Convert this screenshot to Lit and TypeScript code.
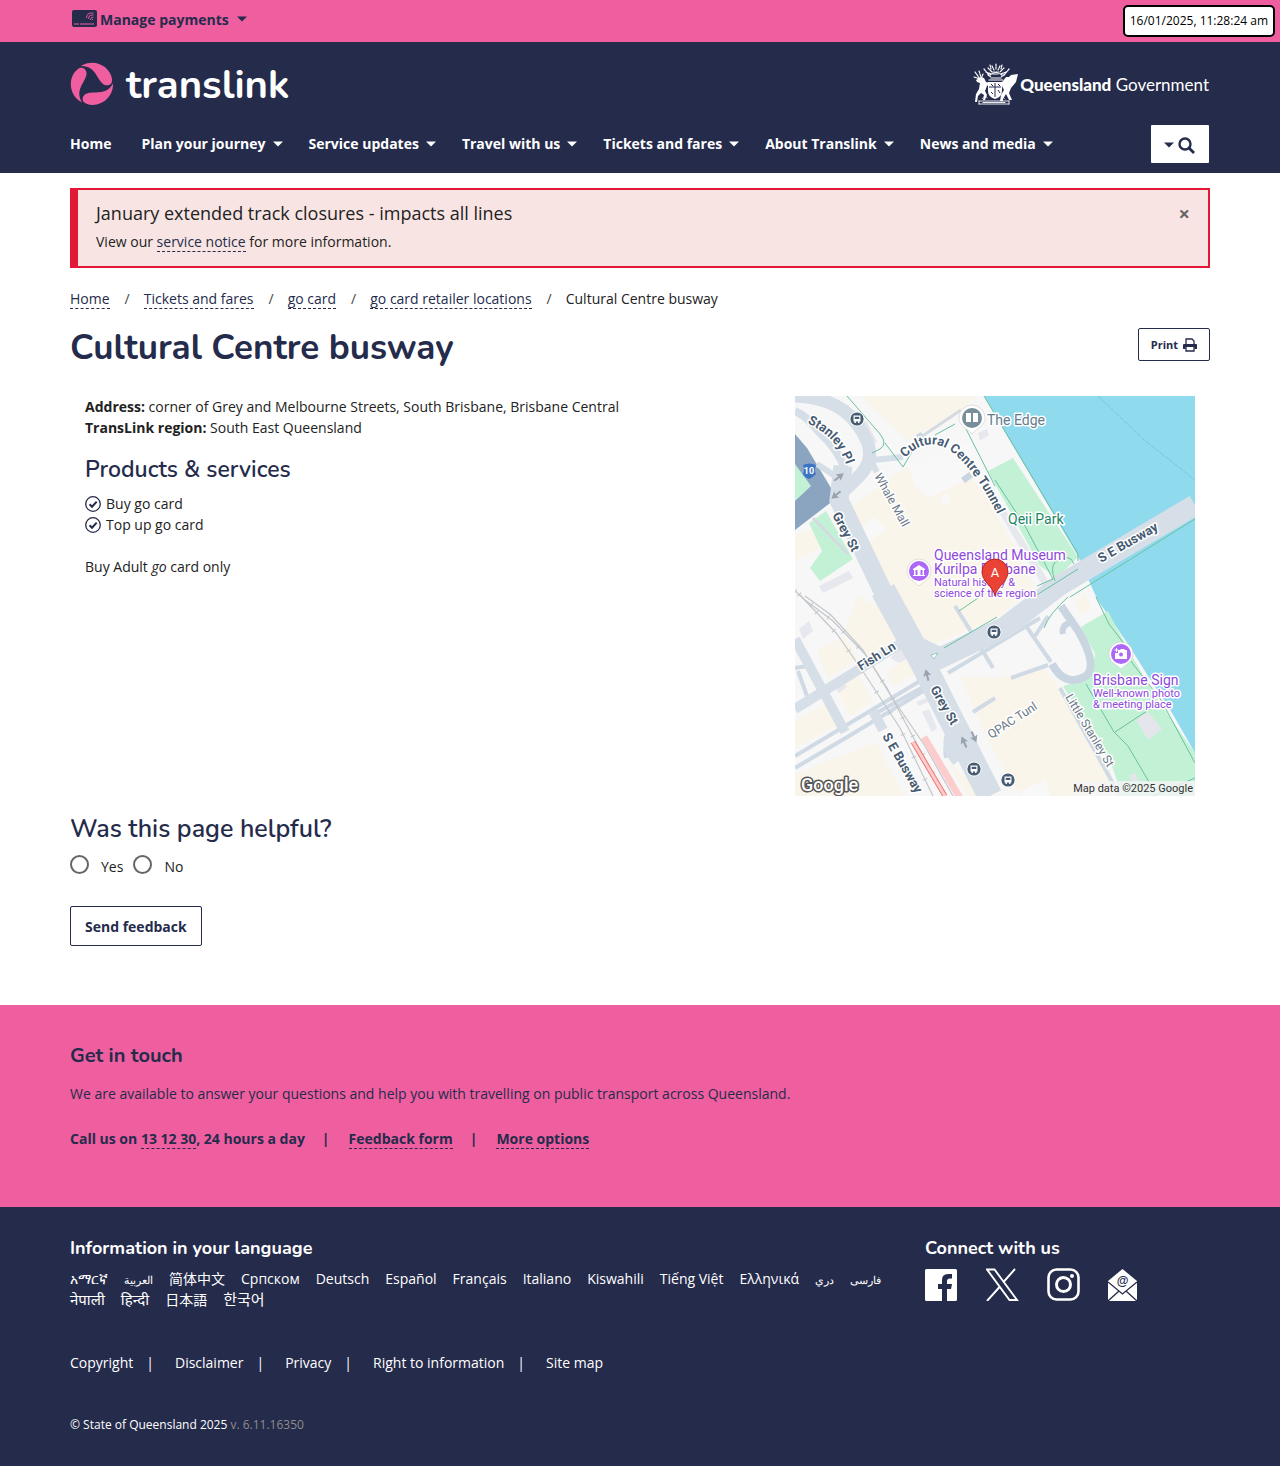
import { LitElement, html, css, svg } from "lit";
import { customElement } from "lit/decorators.js";

const busStop = (x: number, y: number) => svg`
  <g transform="translate(${x} ${y})">
    <circle r="7.5" fill="#fff" />
    <circle r="6.6" fill="#475b72" />
    <path d="M-3.5 -3.5h7v6h-1v1.4h-1.4v-1.4h-2.2v1.4h-1.4v-1.4h-1z" fill="#fff" />
    <path d="M-2.3 -2.2h4.6v2.2h-4.6z" fill="#475b72" />
  </g>`;

const arrow = (x: number, y: number, deg: number) => svg`
  <path transform="translate(${x} ${y}) rotate(${deg})" d="M0 -6L4 1L1 0V6H-1V0L-4 1Z" fill="#9aa3ad" />`;

@customElement("street-map")
class StreetMap extends LitElement {
  static styles = css`
    :host { display: block; }
    .map { display: block; width: 100%; height: auto; background: #f7f7f7; }
    .label { font-family: Roboto, "Liberation Sans", sans-serif; paint-order: stroke; stroke: #fff; stroke-width: 3px; stroke-linejoin: round; }
    .road { fill: #475b72; font-size: 13px; font-weight: 700; }
    .minor { fill: #6b7887; font-size: 12px; }
    .place { fill: #8f49dc; font-size: 14px; }
    .note { fill: #8f49dc; font-size: 11px; }
    .grey { fill: #637c8d; font-size: 14px; }
    .park { fill: #1a8563; font-size: 14px; }
    .credit { font-family: Roboto, "Liberation Sans", sans-serif; font-size: 11px; fill: #333; }
    .google { font-family: Roboto, "Liberation Sans", sans-serif; font-size: 18px; font-weight: 500; fill: #fff; stroke: #555; stroke-width: 3px; paint-order: stroke; stroke-linejoin: round; }
  `;

  render() {
    return html`
      <svg class="map" viewBox="0 0 400 400" role="img" aria-label="Map of Cultural Centre busway">
        <path d="M189 0H400V357L373 310L353 280L333 248L302 203L283 160L207 31Z" fill="#90daee" />
        <path d="M303 0L348 43L400 84" stroke="#6dcbe6" fill="none" stroke-dasharray="5 1" />
        <g fill="#faf5ea">
          <path d="M66 0H181L166 14L113 44Z" />
          <path d="M53 113L113 70L120 89L133 102L176 80L204 123L240 190L200 224L128 252L70 148Z" />
          <path d="M0 138L17 133L27 152L0 164Z" />
          <path d="M62 200L107 223L104 240L74 260L50 236Z" />
          <path d="M22 254L50 240L62 262L33 283Z" />
          <path d="M92 275L114 261L122 277L98 290Z" />
          <path d="M41 292L62 278L78 305L55 320Z" />
          <path d="M0 324L32 308L43 328L0 352Z" />
          <path d="M0 378L82 346L92 370L110 400H0Z" />
          <path d="M165 281L200 282L250 273L267 297L318 380L308 400H225L196 350Z" />
          <path d="M279 204L290 198L296 212L286 219Z" />
          <path d="M150 362L166 388L172 400H190Z" />
        </g>
        <g fill="#f8f8f8">
          <path d="M62 134L80 121L91 134L72 147Z" />
          <path d="M145 103L152 98L156 105L149 109Z" />
          <path d="M226 395L250 384L256 400H226Z" />
          <path d="M180 235L196 226L201 233L184 242Z" />
          <path d="M114 72L176 44L192 70L176 82L133 102L120 89Z" />
        </g>
        <g fill="#e7e8ee">
          <path d="M60 20L72 26L82 46L77 50Z" />
          <path d="M183 37L192 33L194 39L185 45Z" />
          <path d="M4 233L14 225L18 235L8 243Z" />
          <path d="M24 190L54 175L58 182L28 197Z" />
          <path d="M95 262L110 247L116 261L104 267Z" />
          <path d="M40 292L48 286L52 291L44 297Z" />
          <path d="M121 306L131 302L133 306L124 310Z" />
          <path d="M127 316L134 313L142 332L137 336Z" />
          <path d="M205 118L210 113L254 186L248 190Z" />
        </g>
        <g fill="#c3f1d5">
          <path d="M193 75L218 62L283 161L262 182L245 170Z" />
          <path d="M286 231L313 215L317 223L333 253L360 300L400 357V400H327L317 370L268 290L280 287L298 272L300 258Z" />
          <path d="M14 127L31 115L58 163L25 185L15 172L27 155Z" />
        </g>
        <path d="M341 324L353 316L367 333L353 344Z M334 380L340 377L344 386H337Z" fill="#e4e6ec" />
        <path d="M0 38L12 52L39 97V104L0 134Z" fill="#8ba5c1" />
        <path d="M0 68L16 90L0 105Z" fill="#c3f1d5" />
        <g fill="none" stroke="#cfdae4" stroke-width="4">
          <path d="M0 360L130 282M0 372L54 340L130 294M78 319L130 290M153 277L200 249L245 222" />
          <path d="M160 210L180 242L198 272M216 282L253 269M231 230L256 266M253 220L240 240M265 292L325 400M0 272L12 270" />
          <path d="M178 316L200 302M3 275L12 300M151 362Q148 345 158 337" />
        </g>
        <g fill="none" stroke="#d6dfe7">
          <path d="M0 0C44 2 62 22 72 45C81 67 66 80 45 98" stroke-width="13" />
          <path d="M0 15Q12 20 24 36Q44 54 51 76" stroke-width="8" />
          <path d="M78 64L108 61M22 68L40 80M76 65L82 76" stroke-width="6" />
          <path d="M48 70L44 104L92 204" stroke-width="19" />
          <path d="M88 194L124 260L195 400" stroke-width="25" />
          <path d="M400 109L265 189L210 231L145 262L120 250" stroke-width="21" />
          <path d="M0 313L110 245" stroke-width="10" />
          <path d="M0 243L50 336M78 315L88 334" stroke-width="10" />
          <path d="M154 340Q150 353 162 366" stroke-width="9" />
        </g>
        <path d="M266 210L284 236Q303 270 291 280Q270 292 257 268" fill="none" stroke="#c9d6e1" stroke-width="8" />
        <path d="M268 238Q266 229 275 227" fill="none" stroke="#c9d6e1" stroke-width="6" />
        <path d="M166 82L174 76L178 81L170 87Z M121 39L126 36L132 44L126 47Z" fill="#c9d6e1" />
        <path d="M126 41L166 14M18 122L53 158" fill="none" stroke="#d5dae1" stroke-width="3" />
        <path d="M136 259L143 257L139 263Z" fill="#fff" stroke="#61b899" stroke-width=".6" />
        <g fill="none" stroke="#6ac1a0">
          <path d="M52 0L85 38Q93 48 85 53L77 57M90 47L108 71L118 54M140 39L160 28M171 33L200 90M189 0L283 158V165" />
          <path d="M200 84L230 130L258 183L242 190M260 185Q255 172 260 166Q275 156 279 168M240 200L283 173M275 201L400 123M164 215L186 200M149 252L202 221M249 232Q254 218 273 201" />
          <path d="M301 201L314 228L327 245L335 264L348 281L366 304L400 367M291 288L319 336L333 350L354 386M320 336L358 311M358 400L400 382" />
        </g>
        <g fill="none" stroke="#c4c7cb" stroke-width="1.2">
          <path d="M0 195L10 204L38 225L70 258L92 292L110 326L150 400" />
          <path d="M4 198L42 238L71 280L105 332L138 400" />
          <path d="M10 200L36 219L68 254L96 300L130 350L158 400" />
        </g>
        <g fill="none" stroke="#c4c7cb" stroke-width="5">
          <path d="M0 195L10 204L38 225L70 258L92 292L110 326L150 400" stroke-dasharray="1 20" />
          <path d="M4 198L42 238L71 280L105 332L138 400" stroke-dasharray="1 24" />
        </g>
        <path d="M129 341L165 402" stroke="#fdcdcd" stroke-width="7" />
        <path d="M118 346L150 400" stroke="#ee7777" stroke-width="5" />
        <path d="M118 346L150 400" stroke="#fcc" stroke-width="3" />
        ${arrow(44, 81, 52)} ${arrow(41, 99, 230)} ${arrow(132, 279, -14)} ${arrow(169, 346, -24)} ${arrow(179, 341, 156)}
        ${busStop(62, 23)} ${busStop(199, 236)} ${busStop(179, 373)} ${busStop(213, 384)}

        <path d="M8 69Q14 66 21 69Q19 75 21 78Q17 82 14 83Q9 81 8 78Q10 73 8 69Z" fill="#3d73c4" />
        <text x="14" y="78" text-anchor="middle" font-family="Roboto, sans-serif" font-size="9" font-weight="700" fill="#fff">10</text>

        <path id="stanley" d="M12 27Q44 42 52 72" fill="none" />
        <path id="tunnel" d="M110 62C128 42 148 46 164 62C180 78 193 98 206 126" fill="none" />
        <text class="label road"><textPath href="#stanley">Stanley Pl</textPath></text>
        <text class="label road"><textPath href="#tunnel">Cultural Centre Tunnel</textPath></text>
        <text class="label minor" transform="translate(79 80) rotate(61)">Whale Mall</text>
        <text class="label road" transform="translate(37 119) rotate(62)">Grey St</text>
        <text class="label road" transform="translate(135 293) rotate(60)">Grey St</text>
        <text class="label road" transform="translate(66 275) rotate(-32)">Fish Ln</text>
        <text class="label road" transform="translate(306 167) rotate(-30)">S E Busway</text>
        <text class="label road" transform="translate(87 340) rotate(60)">S E Busway</text>
        <text class="label minor" transform="translate(196 343) rotate(-33)">QPAC Tunl</text>
        <text class="label minor" transform="translate(270 301) rotate(59)">Little Stanley St</text>
        <text class="label grey" x="192" y="29">The Edge</text>
        <text class="label park" x="213" y="128">Qeii Park</text>
        <text class="label place" x="139" y="164">Queensland Museum</text>
        <text class="label place" x="139" y="178">Kurilpa Brisbane</text>
        <text class="label note" x="139" y="190">Natural history &amp;</text>
        <text class="label note" x="139" y="201">science of the region</text>
        <text class="label place" x="298" y="289">Brisbane Sign</text>
        <text class="label note" x="298" y="301">Well-known photo</text>
        <text class="label note" x="298" y="312">&amp; meeting place</text>

        <path d="M164 22a13 13 0 1 1 26 0c0 8-8 10-13 16c-5-6-13-8-13-16z" fill="#fff" stroke="#ccc" stroke-width=".6" />
        <circle cx="177" cy="22" r="10" fill="#788f9b" />
        <path d="M171 17h5v9h-5zM178 17h5v9h-5z" fill="#fff" />
        <path d="M112 175a12 12 0 1 1 24 0c0 8-7 10-12 15c-5-5-12-7-12-15z" fill="#fff" stroke="#ccc" stroke-width=".6" />
        <circle cx="124" cy="175" r="10" fill="#ae68f7" />
        <path d="M118 173l6-4 6 4v1h-1v5h1v1h-12v-1h1v-5h-1zM120.500 174v5h2v-5zM125.500 174v5h2v-5z" fill="#fff" fill-rule="evenodd" />
        <path d="M314 258a12 12 0 1 1 24 0c0 8-7 10-12 15c-5-5-12-7-12-15z" fill="#fff" stroke="#ccc" stroke-width=".6" />
        <circle cx="326" cy="258" r="10" fill="#ae68f7" />
        <path d="M323 254h2l1-1h3l1 1h2v9h-12v-6h3z" fill="#fff" />
        <circle cx="326" cy="258.500" r="2" fill="#ae68f7" />
        <path d="M321.500 252v4M319.500 254h4" stroke="#fff" />

        <path d="M200 200C198 190 187 186 187 176a13 13 0 0 1 26 0C213 186 202 190 200 200Z" fill="#ea4335" stroke="#b31412" stroke-width=".8" />
        <text x="200" y="181" text-anchor="middle" font-family="Roboto, sans-serif" font-size="13" fill="#fff">A</text>
        <text class="google" x="6" y="395">Google</text>
        <rect x="278" y="385" width="122" height="15" fill="#f5f5f5" fill-opacity=".8" />
        <text class="credit" x="398" y="396" text-anchor="end">Map data ©2025 Google</text>
      </svg>`;
  }
}

const NAV = ["Plan your journey", "Service updates", "Travel with us", "Tickets and fares", "About Translink", "News and media"];
const CRUMBS = ["Home", "Tickets and fares", "go card", "go card retailer locations"];
const LANGS: [string, string][] = [
  ["am", "አማርኛ"], ["ar", "العربية"], ["zh", "简体中文"], ["sr", "Српском"], ["de", "Deutsch"], ["es", "Español"],
  ["fr", "Français"], ["it", "Italiano"], ["sw", "Kiswahili"], ["vi", "Tiếng Việt"], ["el", "Ελληνικά"],
  ["prs", "دري"], ["fa", "فارسی"], ["ne", "नेपाली"], ["hi", "हिन्दी"], ["ja", "日本語"], ["ko", "한국어"],
];
const LEGAL = ["Copyright", "Disclaimer", "Privacy", "Right to information", "Site map"];

const caret = html`<svg class="caret" viewBox="0 0 10 6" aria-hidden="true"><path d="M0 .5H10L5 5.500Z" fill="currentColor" /></svg>`;
const tick = html`
  <svg class="tick" viewBox="0 0 16 16" aria-hidden="true">
    <circle cx="8" cy="8" r="7.300" fill="none" stroke="#252b4b" stroke-width="1.300" />
    <path d="M4.500 8.300L7 10.700L11.700 5.600" fill="none" stroke="#252b4b" stroke-width="2" />
  </svg>`;

@customElement("app-root")
class AppRoot extends LitElement {
  static styles = css`
    :host {
      --navy: #252b4b;
      --pink: #ef5fa0;
      display: block;
      background: #fff;
      color: #222;
      font: 400 14px/21px "Open Sans", "Noto Sans", "Noto Sans CJK SC", sans-serif;
    }
    * { box-sizing: border-box; }
    h1, h2, h3, p, ul, ol { margin: 0; padding: 0; }
    ul, ol { list-style: none; }
    a { color: inherit; text-decoration: none; }
    button { font: inherit; color: inherit; border: 0; background: none; padding: 0; cursor: pointer; }
    .wrap { max-width: 1140px; margin: 0 auto; }
    .caret { width: 10px; height: 6px; flex: none; }
    .tick { width: 16px; height: 16px; flex: none; margin-top: 3px; }

    .top { background: var(--pink); color: var(--navy); height: 42px; }
    .pay { display: flex; align-items: center; font-weight: 700; height: 38px; }
    .pay .card { width: 26px; height: 18px; margin: 0 3px 0 1px; }
    .pay .caret { margin-left: 8px; }
    .clock { position: absolute; top: 5px; right: 5px; height: 32px; padding: 0 5px; border: 2px solid #000; border-radius: 5px; background: #fff; color: #000; font-size: 12px; line-height: 28px; }

    .header { background: var(--navy); color: #fff; padding-bottom: 10px; }
    .brands { display: flex; justify-content: space-between; align-items: center; height: 83px; }
    .brand { display: flex; align-items: center; }
    .swirl { width: 44px; height: 44px; }
    .wordmark { font: 700 40px/44px Nunito, Lato, sans-serif; margin-left: 12px; padding-top: 2px; }
    .arms { width: 46px; height: 42px; margin-right: 1px; }
    .gov { font: 400 17px/24px Lato, sans-serif; white-space: pre; padding: 2px 1px 0 0; }
    .gov b { font-weight: 900; }
    .navrow { display: flex; justify-content: space-between; align-items: center; }
    .nav { display: flex; gap: 26px; font-weight: 700; padding-bottom: 2px; }
    .nav .item { display: flex; align-items: center; gap: 7px; }
    .nav .caret { margin-top: 2px; }
    .nav .home { padding-right: 4px; }
    .search { display: flex; align-items: center; gap: 4px; padding: 2px 13px 0; width: 58px; height: 38px; background: #fff; color: var(--navy); border-radius: 1px; margin-right: 1px; }
    .search .glass { width: 17px; height: 17px; flex: none; }

    .alert { display: flex; justify-content: space-between; align-items: flex-start; margin-top: 15px; padding: 12px 18px 14px; border: 2px solid #e31837; border-left-width: 8px; background: #f8e5e3; }
    .close { color: #666; font-size: 20px; font-weight: 700; line-height: 24px; }
    .dashed { color: #252b4b; border-bottom: 1px dashed #252b4b; }
    .crumbs { display: flex; margin-top: 20px; }
    .crumbs li + li::before { content: "/"; padding: 0 14px 0 15px; color: #444; }

    h1, h2, h3 { color: var(--navy); font-family: Nunito, Lato, sans-serif; font-weight: 700; }
    .alert h2 { font-family: "Open Sans", sans-serif; color: #222; font-size: 18px; font-weight: 400; line-height: 22px; margin-bottom: 7px; }
    .title { display: flex; justify-content: space-between; align-items: flex-start; margin-top: 19px; }
    h1 { font-size: 35px; line-height: 40px; }
    .print { display: flex; align-items: center; gap: 5px; border: 1px solid var(--navy); border-radius: 2px; height: 33px; padding: 0 12px; color: var(--navy); font-size: 11px; font-weight: 700; }
    .printer { width: 14px; height: 14px; }
    .detail { display: flex; justify-content: space-between; gap: 30px; margin-top: 28px; padding: 0 15px; }
    .detail .map { flex: 0 1 400px; }
    .detail h3 { font-size: 23px; font-weight: 600; line-height: 28px; margin: 18px 0 9px; }
    .detail li { display: flex; gap: 5px; }
    .detail .remark { margin-top: 21px; }
    .helpful { font-size: 25px; font-weight: 600; line-height: 30px; margin-top: 18px; }
    .radios { display: flex; margin-top: 10px; }
    .radios label { display: flex; margin-right: 10px; }
    .radios span { padding-top: 2px; }
    .radios input { appearance: none; width: 19px; height: 19px; margin: 1px 12px 0 0; border: 2px solid #666; border-radius: 50%; }
    .radios input:checked { box-shadow: inset 0 0 0 3px #fff; background: var(--navy); }
    .send { display: block; height: 40px; margin: 29px 0 59px; padding: 0 14px; border: 1px solid var(--navy); border-radius: 2px; color: var(--navy); font-weight: 700; }

    .touch { background: var(--pink); color: var(--navy); padding: 38px 0 58px; }
    .touch h2 { font-size: 20px; line-height: 26px; margin-bottom: 14px; }
    .touch .ways { display: flex; margin-top: 24px; font-weight: 700; }
    .touch li + li::before { content: "|"; padding: 0 19px 0 17px; }

    .footer { background: var(--navy); color: #fff; padding: 28px 0 31px; }
    .cols { display: grid; grid-template-columns: 3fr 1fr; }
    .footer h2 { color: #fff; font-size: 18px; line-height: 26px; margin-bottom: 7px; }
    .langs { display: flex; flex-wrap: wrap; gap: 0 16px; padding-right: 15px; }
    .langs li { height: 21px; }
    .langs :lang(ar), .langs :lang(prs), .langs :lang(fa) { font-size: 11px; }
    .langs :lang(ne), .langs :lang(hi), .langs :lang(ko) { font-size: 15px; }
    .social { display: flex; gap: 28px; }
    .social svg { display: block; width: 33px; height: 33px; }
    .legal { display: flex; margin-top: 42px; }
    .legal li + li::before { content: "|"; padding: 0 21px 0 13px; }
    .copy { margin-top: 41px; font-size: 12px; }
    .copy span { color: #8d8d8d; }
  `;

  render() {
    return html`
      <div class="top">
        <div class="wrap">
          <button class="pay">
            <svg class="card" viewBox="0 0 26 18" aria-hidden="true">
              <rect x="1" y="0" width="25" height="17" rx="2" fill="#252b4b" />
              <path d="M3 14h5M9 14h14" stroke="#ef5fa0" />
              <path d="M15.500 8q0-5 5-5h2M17.500 9q0-4 3-4h2M19.500 10q0-3 3-3M21.500 10v-1" stroke="#ef5fa0" stroke-width=".9" fill="none" />
            </svg>Manage payments${caret}
          </button>
        </div>
        <time class="clock">16/01/2025, 11:28:24 am</time>
      </div>

      <header class="header">
        <div class="wrap">
          <div class="brands">
            <a class="brand" href="#">
              <svg class="swirl" viewBox="0 0 44 44" aria-hidden="true">
                <g fill="#ef5fa0">
                  <path d="M11 4C24 -4 40 4 42 17C43 24 35 25 32 21C26 15 25 4 11 4Z" />
                  <path d="M11 4C24 -4 40 4 42 17C43 24 35 25 32 21C26 15 25 4 11 4Z" transform="rotate(120 22 22)" />
                  <path d="M11 4C24 -4 40 4 42 17C43 24 35 25 32 21C26 15 25 4 11 4Z" transform="rotate(240 22 22)" />
                </g>
              </svg>
              <span class="wordmark">translink</span>
            </a>
            <a class="brand" href="#">
              <svg class="arms" viewBox="0 0 46 42" aria-hidden="true">
                <g fill="none" stroke="#fff" stroke-width="1.200" stroke-linecap="round">
                  <path d="M2 9l5 7M1 14l6 2M6 8l2 6M10 11l-2 5M23 1v6M19 3l2 4M27 3l-2 4M15 5l4 4M31 5l-4 4M13 9l5 2M33 9l-5 2M17 2l1 4M29 2l-1 4M36 6l-5 6M11 6l5 6" stroke-dasharray="2 1" />
                  <path d="M17 12q6-5 12 0M18 15h10M16 17h14" />
                  <path d="M19 9h8M20 11h6M15 12l3 2M31 12l-3 2" stroke-dasharray="1 1" />
                  <path d="M6 38h30M6 41h30M6 38v3M36 38v3M10 39.500h22" stroke-width=".9" />
                </g>
                <path d="M3 17l5-3 3 1 2 4 4 1-3 3-2 5 2 4-2 5h-2l1-5-3-2-3 3-1 6H2l1-8 3-5 1-6-3-1z" fill="#fff" />
                <path d="M45 11l-2 8-5 6-2 5 3 7h-3l-3-6-3 5v2h-3l1-6 3-5-2-4-3-2 4-3 3-4h3l2-2z" fill="#fff" />
                <path d="M15 19h14v9q0 6-7 8q-7-2-7-8z" fill="#fff" />
                <path d="M16 24h12M22 20v14M18 21l2 2M25 21l2 2M18 29l2 2M25 27l2 3" stroke="#252b4b" stroke-width="1" />
                <path d="M9 36l3-4 3 4M30 34l3 3" stroke="#fff" fill="none" stroke-dasharray="1 1" />
              </svg>
              <span class="gov"><b>Queensland</b> Government</span>
            </a>
          </div>
          <div class="navrow">
            <nav class="nav">
              <a class="item home" href="#">Home</a>
              ${NAV.map((n) => html`<a class="item" href="#">${n}${caret}</a>`)}
            </nav>
            <button class="search" aria-label="Search">
              ${caret}
              <svg class="glass" viewBox="0 0 17 17"><circle cx="7" cy="7" r="5.500" fill="none" stroke="currentColor" stroke-width="2.400" /><path d="M11 11l5 5" stroke="currentColor" stroke-width="2.800" /></svg>
            </button>
          </div>
        </div>
      </header>

      <main class="wrap">
        <section class="alert">
          <div>
            <h2>January extended track closures - impacts all lines</h2>
            <p>View our <a class="dashed" href="#">service notice</a> for more information.</p>
          </div>
          <button class="close" aria-label="Close">×</button>
        </section>

        <ol class="crumbs">
          ${CRUMBS.map((c) => html`<li><a class="dashed" href="#">${c}</a></li>`)}
          <li>Cultural Centre busway</li>
        </ol>

        <div class="title">
          <h1>Cultural Centre busway</h1>
          <button class="print">Print
            <svg class="printer" viewBox="0 0 14 14" aria-hidden="true">
              <path d="M3 7V1h6l2 2v4" fill="none" stroke="currentColor" stroke-width="1.300" />
              <path d="M1 6h12q1 0 1 1v4h-2.500v-2h-9v2H0V7q0-1 1-1z" fill="currentColor" />
              <path d="M3 9v4h8V9" fill="none" stroke="currentColor" stroke-width="1.300" />
            </svg>
          </button>
        </div>

        <div class="detail">
          <div>
            <p><b>Address:</b> corner of Grey and Melbourne Streets, South Brisbane, Brisbane Central</p>
            <p><b>TransLink region:</b> South East Queensland</p>
            <h3>Products &amp; services</h3>
            <ul>
              <li>${tick}Buy go card</li>
              <li>${tick}Top up go card</li>
            </ul>
            <p class="remark">Buy Adult <i>go</i> card only</p>
          </div>
          <street-map class="map"></street-map>
        </div>

        <form @submit=${(e: Event) => e.preventDefault()}>
          <h2 class="helpful" id="helpful">Was this page helpful?</h2>
          <div class="radios" role="radiogroup" aria-labelledby="helpful">
            <label><input type="radio" name="helpful" value="yes" /><span>Yes</span></label>
            <label><input type="radio" name="helpful" value="no" /><span>No</span></label>
          </div>
          <button class="send">Send feedback</button>
        </form>
      </main>

      <section class="touch">
        <div class="wrap">
          <h2>Get in touch</h2>
          <p>We are available to answer your questions and help you with travelling on public transport across Queensland.</p>
          <ul class="ways">
            <li>Call us on <a class="dashed" href="#">13 12 30</a>, 24 hours a day</li>
            <li><a class="dashed" href="#">Feedback form</a></li>
            <li><a class="dashed" href="#">More options</a></li>
          </ul>
        </div>
      </section>

      <footer class="footer">
        <div class="wrap">
          <div class="cols">
            <div>
              <h2>Information in your language</h2>
              <ul class="langs">${LANGS.map(([code, name]) => html`<li><a href="#" lang=${code}>${name}</a></li>`)}</ul>
            </div>
            <div>
              <h2>Connect with us</h2>
              <div class="social">
                <a href="#" aria-label="Facebook"><svg viewBox="0 0 33 33"><path d="M1.500 1H30.500Q32 1 32 2.500V31.500Q32 33 30.500 33H22V21H26L27 16H22V13Q22 10.500 25 10.500H27V6H23Q17 6 17 12V16H13V21H17V33H1.500Q0 33 0 31.500V2.500Q0 1 1.500 1Z" fill="#fff" /></svg></a>
                <a href="#" aria-label="X"><svg viewBox="0 0 33 33"><path d="M1 1.500H8.500L31 32H23.500ZM29 1L17.500 14M14 18.500L1 33" fill="none" stroke="#fff" stroke-width="1.900" /></svg></a>
                <a href="#" aria-label="Instagram"><svg viewBox="0 0 33 33"><rect x="1.500" y="1.500" width="30" height="30" rx="8" fill="none" stroke="#fff" stroke-width="2.600" /><circle cx="16.500" cy="16.500" r="7" fill="none" stroke="#fff" stroke-width="3" /><circle cx="25" cy="8" r="2" fill="#fff" /></svg></a>
                <a href="#" aria-label="Email newsletter"><svg viewBox="0 0 33 33"><path d="M0 13L14.500 1L29 13V33H0Z" fill="#fff" /><path d="M0 14L14.500 26L29 14M0 33L11 23M29 33L18 23" fill="none" stroke="#252b4b" stroke-width="1.300" /><text x="14.500" y="17" text-anchor="middle" font-size="12" font-weight="600" font-family="Liberation Sans, sans-serif" fill="#252b4b">@</text></svg></a>
              </div>
            </div>
          </div>
          <ul class="legal">${LEGAL.map((l) => html`<li><a href="#">${l}</a></li>`)}</ul>
          <p class="copy">© State of Queensland 2025 <span>v. 6.11.16350</span></p>
        </div>
      </footer>
    `;
  }
}
